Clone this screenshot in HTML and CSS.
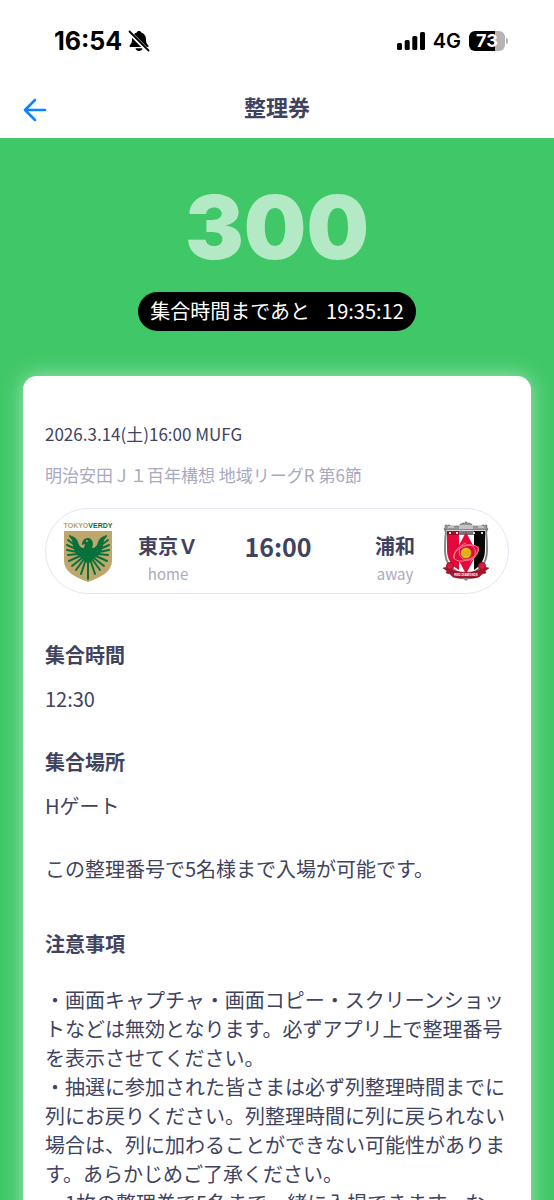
FILE: index.html
```html
<!DOCTYPE html>
<html lang="ja">
<head>
    <meta charset="UTF-8">
    <meta name="viewport" content="width=device-width, initial-scale=1.0">
    <title>整理券</title>
    <link rel="stylesheet" href="styles.css">
</head>
<body>
    <div class="status-bar">
        <div class="status-left">
            <span class="clock">16:54</span>
            <svg class="bell" width="22" height="22" viewBox="0 0 22 22">
                <path d="M11 1c1.200 0 2 .6 2.300 1.500 2.900 1 4.700 3.400 4.700 6.400 0 4 1 5 2.200 6.300.6.7.3 1.800-.7 1.800h-17c-1 0-1.300-1.100-.7-1.800C3 13.900 4 12.900 4 8.900c0-3 1.800-5.400 4.700-6.400C9 1.600 9.800 1 11 1z"/>
                <path d="M7.500 18.200h7c-.3 1.800-1.700 2.800-3.500 2.800s-3.200-1-3.500-2.800z"/>
                <path d="M1 2L20 21" stroke="#fff" stroke-width="4"/>
                <path d="M1.500 1.500L20.500 20.500" stroke="#000" stroke-width="1.800" stroke-linecap="round"/>
            </svg>
        </div>
        <div class="status-right">
            <svg width="28" height="18" viewBox="0 0 28 18">
                <rect x="0" y="11" width="5" height="7" rx="1.500"/>
                <rect x="7.700" y="8" width="5" height="10" rx="1.500"/>
                <rect x="15.300" y="4" width="5" height="14" rx="1.500"/>
                <rect x="23" y="0" width="5" height="18" rx="1.500"/>
            </svg>
            <span class="network">4G</span>
            <span class="battery">73</span>
        </div>
    </div>

    <header>
        <a class="back" href="#" aria-label="戻る">
            <svg width="24" height="24" viewBox="0 0 24 24" fill="none" stroke="#0a84ff" stroke-width="2.600" stroke-linecap="round" stroke-linejoin="round">
                <path d="M22 12H2M12 2L2 12l10 10"/>
            </svg>
        </a>
        <h1>整理券</h1>
    </header>

    <main>
        <p class="number">300</p>
        <p class="countdown"><span>集合時間まであと</span><span>19:35:12</span></p>

        <div class="card">
            <p class="date">2026.3.14(土)16:00 MUFG</p>
            <p class="league">明治安田Ｊ１百年構想 地域リーグR 第6節</p>

            <div class="match">
                <svg class="crest" width="50" height="66" viewBox="0 0 50 66">
                    <text class="crest-name" x="25" y="10" text-anchor="middle" fill="#b8a067">TOKYO<tspan fill="#08713b">VERDY</tspan></text>
                    <path d="M1 13h48v30c0 10-10 16-24 21C11 59 1 53 1 43z" fill="#bfa76b"/>
                    <g fill="none" stroke="#08713b" stroke-width="2" stroke-linecap="round">
                        <path d="M13 25L7 18M13 28L5 22M13 31L4 27M14 34L4 32M15 36L5 37M17 38L6 43M19 40L9 48M21 41L13 52M23 41L18 56M25 41V61"/>
                        <path d="M37 25L43 18M37 28L45 22M37 31L46 27M36 34L46 32M35 36L45 37M33 38L44 43M31 40L41 48M29 41L37 52M27 41L32 56"/>
                    </g>
                    <path d="M9 18c3 1 5 3 6 6 1 4 3 6 6 6l1-4-3 1c0-4 2-7 6-7 3 0 5 3 5 6l-1 4c3 0 5-2 6-6 1-3 3-5 6-6 0 12-3 19-11 23l-5 5-5-5C12 37 9 30 9 18z" fill="#08713b"/>
                    <circle cx="24" cy="23" r="1" fill="#bfa76b"/>
                </svg>
                <div class="team">
                    <strong>東京Ｖ</strong>
                    <span>home</span>
                </div>
                <strong class="kickoff">16:00</strong>
                <div class="team away">
                    <strong>浦和</strong>
                    <span>away</span>
                </div>
                <svg class="crest" width="46" height="60" viewBox="0 0 46 60">
                    <path d="M2 8h42l-1 4c1 5 1 11 1 17 0 14-7 21-21 26C9 50 2 43 2 29c0-6 0-12 1-17z" fill="#fff" stroke="#888" stroke-width="2"/>
                    <path d="M4 10h12v39C7 44 4 37 4 28z" fill="#e4093b"/>
                    <path d="M31 10h11v18c0 9-3 16-11 21z" fill="#080808"/>
                    <path d="M16 10h15v4H16z" fill="#77777a"/>
                    <path d="M4 10h12v4H4z" fill="#a4062c"/>
                    <path d="M6 11h2v2H6zM13 11h2v2h-2zM30 11h2v2h-2zM38 11h2v2h-2z" fill="#ddd"/>
                    <path d="M2 4h2v1h1V4h2v1h10V3h2V2h2v1h1V1h2v2h1V2h2v1h2v2h10V4h2v1h1V4h2v5H2z" fill="#999" stroke="#555" stroke-width=".5"/>
                    <path d="M5 6h6M16 5h14M35 6h6M16 7h14" stroke="#eee" fill="none"/>
                    <path d="M23 11l11 21-11 21-11-21z" fill="#e4093b"/>
                    <ellipse cx="23" cy="32" rx="13" ry="7" transform="rotate(-22 23 32)" fill="#e4093b" stroke="#ff8797" stroke-width=".8"/>
                    <path d="M11 38c0-10 6-15 16-14 7 1 7 12 0 17M35 25c2 10-7 17-15 13-6-4-5-14 3-16" fill="none" stroke="#ff9ba6" stroke-width=".7"/>
                    <circle cx="23" cy="32" r="5.500" fill="#e9c01e" stroke="#a5331b" stroke-width=".6"/>
                    <path d="M19 30h8M18 32h10M19 34h8" stroke="#b98718" stroke-width=".5"/>
                    <path d="M0 47l5-1c7 7 29 7 36 0l5 1-4 3 1 2-4 1-3 3c-6 2-20 2-26 0l-3-3-4-1 1-2z" fill="#a7142e" stroke="#56121e" stroke-width=".5"/>
                    <path d="M19 57h8l-4 3z" fill="#888"/>
                    <circle cx="7" cy="45" r="3.500" fill="#df183c" stroke="#8e102a"/>
                    <circle cx="39" cy="45" r="3.500" fill="#df183c" stroke="#8e102a"/>
                    <text class="ribbon-name" x="23" y="55" text-anchor="middle">RED DIAMONDS</text>
                </svg>
            </div>

            <section>
                <h2>集合時間</h2>
                <p>12:30</p>
            </section>
            <section>
                <h2>集合場所</h2>
                <p>Hゲート</p>
            </section>
            <p class="capacity">この整理番号で5名様まで入場が可能です。</p>

            <section class="notes">
                <h2>注意事項</h2>
                <p>・画面キャプチャ・画面コピー・スクリーンショットなどは無効となります。必ずアプリ上で整理番号を表示させてください。</p>
                <p>・抽選に参加された皆さまは必ず列整理時間までに列にお戻りください。列整理時間に列に戻られない場合は、列に加わることができない可能性があります。あらかじめご了承ください。</p>
                <p>・1枚の整理券で5名まで一緒に入場できます。な</p>
            </section>
        </div>
    </main>
</body>
</html>
```
FILE: styles.css
```css
* {
    box-sizing: border-box;
}

body {
    display: flex;
    flex-direction: column;
    height: 100vh;
    margin: 0;
    overflow: hidden;
    background-color: #fff;
    color: #40435f;
    font-family: "Noto Sans CJK JP", sans-serif;
    font-size: 20px;
    line-height: 30px;
}

h1, h2, p {
    margin: 0;
}

.status-bar {
    display: flex;
    justify-content: space-between;
    align-items: center;
    padding: 26px 46px 24px 54px;
    color: #000;
    font-family: Inter, sans-serif;
}

.status-left, .status-right {
    display: flex;
    align-items: center;
    gap: 6px;
}

.status-right {
    gap: 8px;
}

.clock {
    font-size: 25px;
    font-weight: 700;
}

.network {
    font-weight: 600;
}

.battery {
    position: relative;
    width: 36px;
    height: 20px;
    margin-right: 3px;
    border-radius: 6px;
    background: linear-gradient(to right, #000 73%, #b4b4b4 73%);
    color: #fff;
    font-size: 18px;
    font-weight: 700;
    line-height: 20px;
    text-align: center;
}

.battery::after {
    content: "";
    position: absolute;
    top: 7px;
    right: -3px;
    width: 2px;
    height: 6px;
    border-radius: 0 2px 2px 0;
    background-color: #b4b4b4;
}

header {
    display: grid;
    grid-template-columns: 24px 1fr 24px;
    align-items: center;
    padding: 10px 23px 16px;
}

.back {
    display: flex;
    padding-top: 8px;
}

h1 {
    font-size: 22px;
    line-height: 30px;
    text-align: center;
}

main {
    display: flex;
    flex: 1;
    flex-direction: column;
    align-items: center;
    min-height: 0;
    padding: 39px 23px 0;
    overflow-y: auto;
    scrollbar-width: none;
    background-color: #40c868;
}

.number {
    color: #b3e9c4;
    font-family: Inter, sans-serif;
    font-size: 88px;
    font-weight: 900;
    line-height: 100px;
}

.countdown {
    display: flex;
    gap: 16px;
    margin: 15px 0 45px;
    padding: 4px 12px 5px;
    border-radius: 20px;
    background-color: #000;
    color: #fff;
}

.card {
    flex: none;
    width: 100%;
    padding: 43px 22px;
    border-radius: 14px;
    background-color: #fff;
    box-shadow: 0 0 20px rgba(255, 255, 255, 0.5);
}

.date, .league {
    font-size: 17px;
}

.league {
    margin-top: 11px;
    color: #a9a9c1;
}

.match {
    display: grid;
    grid-template-columns: 50px 1fr 1fr 1fr 46px;
    align-items: center;
    justify-items: center;
    height: 86px;
    margin: 18px 0 46px;
    padding: 0 19px 0 17px;
    border: 1px solid #e6e5f3;
    border-radius: 43px;
}

.crest-name {
    font-family: "Liberation Sans", sans-serif;
    font-size: 7px;
    font-weight: 700;
}

.ribbon-name {
    fill: #fff;
    font-family: "Liberation Sans", sans-serif;
    font-size: 3px;
    font-weight: 700;
}

.team {
    display: flex;
    flex-direction: column;
    align-items: center;
    padding-top: 15px;
}

.away {
    padding-left: 14px;
}

.team span {
    color: #a9a9c1;
    font-size: 15px;
    line-height: 26px;
}

.kickoff {
    padding-bottom: 10px;
    font-size: 25px;
}

h2 {
    margin-bottom: 14px;
    font-size: 20px;
    line-height: 30px;
}

section {
    margin-bottom: 33px;
}

.notes {
    margin: 45px 0 0;
}

.notes h2 {
    margin-bottom: 26px;
}

.notes p {
    line-height: 29px;
}
```
